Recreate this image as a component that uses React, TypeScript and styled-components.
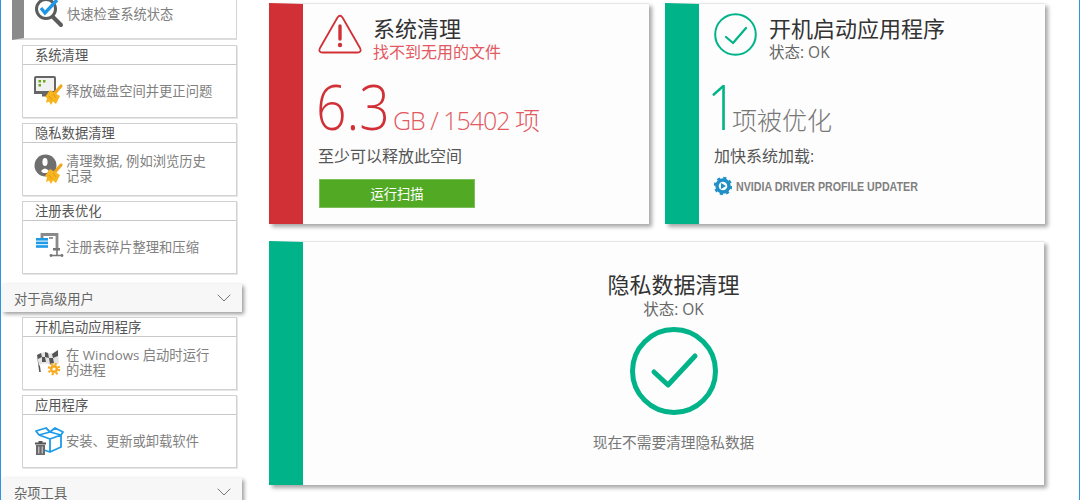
import React from "react";
import styled, { createGlobalStyle } from "styled-components";
import { ChevronDown } from "lucide-react";

const GlobalStyle = createGlobalStyle`
  html, body {
    margin: 0;
    padding: 0;
    background: #ffffff;
  }
  * {
    box-sizing: border-box;
  }
`;

const FONT = `"Open Sans", "Noto Sans CJK SC", sans-serif`;
const RED = "#d13136";
const GREEN = "#00b388";

const Page = styled.div`
  display: flex;
  width: 1080px;
  height: 500px;
  overflow: hidden;
  background: #ffffff;
  border-left: 1px solid #2b95e6;
  border-right: 1px solid #2b95e6;
  font-family: ${FONT};
`;

const Sidebar = styled.aside`
  flex: 0 0 268px;
  display: flex;
  flex-direction: column;
`;

const QuickCard = styled.div`
  display: flex;
  align-items: flex-start;
  flex: 0 0 40px;
  width: 225px;
  margin: 0 0 5px 11px;
  overflow: hidden;
  background: #fff;
  border-left: 12px solid #8a8a8a;
  border-right: 1px solid #d4d4d4;
  border-bottom: 2px solid #dcdcdc;
  padding-left: 11px;
`;

const QuickText = styled.span`
  margin-left: 2px;
  font-size: 13.3px;
  line-height: 28px;
  color: #808080;
`;

const ToolList = styled.div`
  display: flex;
  flex-direction: column;
  gap: 5px;
  margin: 0 0 10px 21px;
  width: 215px;
`;

const ToolCard = styled.div`
  display: flex;
  flex-direction: column;
  height: 73px;
  background: #fff;
  border: 1px solid #d2d2d2;
  box-shadow: 1px 1px 0 #e6e6e6;
`;

const ToolTitle = styled.div`
  flex: 0 0 19px;
  padding-left: 12px;
  border-bottom: 1px solid #c8c8c8;
  font-size: 13.3px;
  line-height: 18px;
  color: #555;
`;

const ToolBody = styled.div`
  flex: 1;
  display: flex;
  align-items: center;
  padding-left: 11px;
`;

const ToolText = styled.span`
  width: 150px;
  margin-left: 2px;
  font-size: 13.3px;
  line-height: 15px;
  color: #808080;
`;

const SectionHeader = styled.div`
  flex: 0 0 28px;
  display: flex;
  align-items: center;
  justify-content: space-between;
  width: 240px;
  margin: 0 0 5px 1px;
  padding: 0 6px 0 12px;
  background: #f7f7f7;
  box-shadow: 2px 2px 4px #999;
  font-size: 13.3px;
  color: #666;
`;

const Main = styled.main`
  flex: 1;
  display: grid;
  grid-template-columns: 380px 380px;
  grid-template-rows: 221px 244px;
  column-gap: 16px;
  row-gap: 17px;
  align-content: start;
  padding-top: 3px;
`;

const Card = styled.section<{ $stripe: string; $wide?: boolean }>`
  display: flex;
  flex-direction: column;
  grid-column: ${(p) => (p.$wide ? "1 / span 2" : "auto")};
  ${(p) => (p.$wide ? "width: 775px;" : "")}
  background: #fdfdfd;
  border-top: 1px solid #e6e6e6;
  border-left: 34px solid ${(p) => p.$stripe};
  box-shadow: 3px 3px 4px #a8a8a8;
`;

const CardInner = styled.div`
  display: flex;
  flex-direction: column;
  padding: 10px 0 0 15px;
`;

const CardHead = styled.div`
  display: flex;
  gap: 11px;
  height: 50px;
`;

const HeadIcon = styled.svg`
  flex: 0 0 44px;
  width: 44px;
  height: 44px;
  margin-top: -1px;
`;

const Title = styled.h2`
  margin: 0;
  font-size: 22px;
  font-weight: 400;
  line-height: 28px;
  color: #333;
`;

const SubTitle = styled.div`
  font-size: 15.5px;
  line-height: 21px;
  color: #666;
`;

const ErrorSubTitle = styled(SubTitle)`
  font-size: 16px;
  color: #e2595f;
`;

const BigRow = styled.div`
  display: flex;
  align-items: baseline;
  height: 72px;
  line-height: 72px;
  margin-top: 6px;
`;

// the original digits are narrower than Open Sans Light, hence the squeeze
const BigNumber = styled.span<{ $color: string }>`
  display: inline-block;
  margin: 0 -18px 0 -2px;
  font-size: 63px;
  font-weight: 300;
  transform: scaleX(0.85);
  transform-origin: left center;
  color: ${(p) => p.$color};
`;

const SingleDigit = styled(BigNumber)`
  margin: 0 -19px 0 -7px;
`;

const BigUnit = styled.span<{ $color: string; $tight?: boolean }>`
  margin-left: 8px;
  font-size: 25px;
  font-weight: 300;
  letter-spacing: ${(p) => (p.$tight ? "-1px" : "0")};
  color: ${(p) => p.$color};
`;

const Note = styled.div`
  margin-top: 2px;
  font-size: 16px;
  line-height: 24px;
  color: #555;
`;

const ScanButton = styled.button`
  display: block;
  width: 156px;
  height: 29px;
  margin: 11px 0 0 1px;
  padding: 0;
  border: 1px solid #7cc05a;
  background: #52aa24;
  color: #fff;
  font-family: ${FONT};
  font-size: 13.3px;
`;

const AppRow = styled.div`
  display: flex;
  align-items: center;
  gap: 4px;
  margin-top: 8px;
`;

const AppName = styled.span`
  display: inline-block;
  transform: scaleX(0.82);
  transform-origin: left center;
  white-space: nowrap;
  font-family: "Liberation Sans", sans-serif;
  font-size: 13px;
  font-weight: 700;
  color: #808080;
`;

const CenterInner = styled.div`
  display: flex;
  flex-direction: column;
  align-items: center;
  padding-top: 27px;
`;

const CenterTitle = styled(Title)`
  line-height: 30px;
`;

const CenterIcon = styled.svg`
  width: 90px;
  height: 90px;
  margin-top: 6px;
`;

const CenterNote = styled.div`
  margin-top: 16px;
  font-size: 14.7px;
  line-height: 20px;
  color: #777;
`;

const IconBox = styled.svg`
  flex: 0 0 30px;
  width: 30px;
  height: 30px;
`;

const QuickIconBox = styled(IconBox)`
  margin-top: -2px;
`;

// a little yellow broom, placed in the corner of the cleaning icons
const Broom = ({ x, y }: { x: number; y: number }) => (
  <g transform={`translate(${x} ${y})`}>
    <path d="M10 8 L16 1" stroke="#f2a81d" strokeWidth="3.2" strokeLinecap="round" />
    <path d="M5 5 L15 11 L11 19 L8 16.5 L6 20 L4 16.5 L1 18 L2 13 L0 12 Z" fill="#f7b51e" />
    <path d="M4 11 L7 15 M8 9 L11 13" stroke="#d98f0c" strokeWidth="0.8" />
  </g>
);

const QuickIcon = () => (
  <QuickIconBox viewBox="0 0 30 30">
    <circle cx="11" cy="11" r="9.5" fill="#fff" stroke="#5c5c5c" strokeWidth="3" />
    <path d="M18 19 L26 27" stroke="#5c5c5c" strokeWidth="4" strokeLinecap="round" />
    <path d="M6 10 L10 15 L22 2" fill="none" stroke="#1e96e6" strokeWidth="3.4" />
  </QuickIconBox>
);

const MonitorIcon = () => (
  <IconBox viewBox="0 0 30 30">
    <rect x="1" y="1" width="20" height="15" rx="1" fill="#f1f1f1" stroke="#666" strokeWidth="2" />
    <path d="M0 15 H22 V18 H0 Z" fill="#666" />
    <rect x="8" y="18" width="6" height="2.5" fill="#666" />
    <rect x="4.5" y="4" width="2.5" height="2.5" fill="#6aa81e" />
    <rect x="9" y="4" width="2.5" height="2.5" fill="#6aa81e" />
    <rect x="4.5" y="8" width="2.5" height="2.5" fill="#6aa81e" />
    <Broom x={11} y={9} />
  </IconBox>
);

const PrivacyIcon = () => (
  <IconBox viewBox="0 0 30 30">
    <circle cx="11.5" cy="11.5" r="11" fill="#6f6f6f" />
    <ellipse cx="11" cy="8" rx="2.6" ry="4" fill="#fff" />
    <path d="M7 17 Q11 12 15 17 L13 19 H9 Z" fill="#fff" />
    <Broom x={11} y={10} />
  </IconBox>
);

const RegistryIcon = () => (
  <IconBox viewBox="0 0 30 30">
    <path d="M8 6 V2.5 H23 V18" fill="none" stroke="#8a8a8a" strokeWidth="2.8" />
    <path d="M15 6 H19 M23 18 V23 M16 23.5 H29" stroke="#777" strokeWidth="1.6" />
    <rect x="19" y="16" width="7" height="2.5" fill="#777" />
    <rect x="2" y="6" width="12" height="2.6" fill="#1e9be8" />
    <rect x="2" y="9.6" width="12" height="2.6" fill="#1e9be8" />
    <rect x="2" y="13.2" width="12" height="2.6" fill="#1e9be8" />
    <circle cx="17" cy="23.5" r="1.4" fill="#777" />
    <circle cx="28" cy="23.5" r="1.4" fill="#777" />
  </IconBox>
);

const FlagIcon = () => (
  <IconBox viewBox="0 0 30 30">
    <path d="M6 24 L4 9" stroke="#555" strokeWidth="1.6" />
    <path d="M3 7 Q10 2 14 5 Q18 7 24 2 L25 15 Q18 19 14 16 Q8 14 5 18 Z" fill="#e3e3e3" />
    <path
      d="M3 7 L7 5 L8 9 L4 11 Z M11 4 L14 5 L15 10 L11 9 Z M18 6 L24 2 L24 8 L19 10 Z M8 9 L11 9 L12 14 L8 14 Z M15 10 L19 10 L20 15 L16 16 Z"
      fill="#555"
    />
    <circle cx="20" cy="21" r="4" fill="#f7a91c" />
    <circle
      cx="20"
      cy="21"
      r="5.2"
      fill="none"
      stroke="#f7a91c"
      strokeWidth="2.2"
      strokeDasharray="2.1 2"
    />
    <circle cx="20" cy="21" r="1.6" fill="#fff" />
  </IconBox>
);

const BoxIcon = () => (
  <IconBox viewBox="0 0 30 30">
    <path
      d="M5 9 L16 13 L27 9 V21 L16 26 L7 23 M16 13 V26 M5 9 L2 5 L12 2 L16 6 L21 2 L29 6 L27 9 M5 9 L16 6 L27 9"
      fill="#fff"
      stroke="#1e9be8"
      strokeWidth="1.8"
      strokeLinejoin="round"
    />
    <rect x="1" y="16.5" width="11" height="2" fill="#555" />
    <rect x="4.5" y="15" width="4" height="2" fill="#555" />
    <path d="M2 19 H11 V29 H2 Z" fill="#6a6a6a" />
    <path d="M4.8 20.5 V27.5 M8.2 20.5 V27.5" stroke="#ddd" strokeWidth="1" />
  </IconBox>
);

const WarningIcon = () => (
  <HeadIcon viewBox="0 0 44 44">
    <path
      d="M19.5 4.5 Q22 1 24.5 4.5 L42 35 Q44 39.5 39.5 39.5 H4.5 Q0 39.5 2 35 Z"
      fill="none"
      stroke={RED}
      strokeWidth="1.8"
      strokeLinejoin="round"
    />
    <path d="M22 13 V26" stroke={RED} strokeWidth="3.4" strokeLinecap="round" />
    <circle cx="22" cy="32" r="2.2" fill={RED} />
  </HeadIcon>
);

const OkIcon = () => (
  <HeadIcon viewBox="0 0 44 44">
    <circle cx="21.5" cy="21.5" r="20.3" fill="none" stroke={GREEN} strokeWidth="2" />
    <path
      d="M12 24 L19 30 L32 15"
      fill="none"
      stroke={GREEN}
      strokeWidth="2.2"
      strokeLinecap="round"
      strokeLinejoin="round"
    />
  </HeadIcon>
);

const GearIcon = () => (
  <svg width="18" height="20" viewBox="0 0 18 20">
    <circle cx="9" cy="10" r="6" fill="none" stroke="#1f8fc8" strokeWidth="3.4" />
    <circle cx="9" cy="10" r="8.2" fill="none" stroke="#1f8fc8" strokeWidth="2" strokeDasharray="3.2 3.24" />
    <path d="M7 7 L12 10 L7 13 Z" fill="#1f8fc8" />
  </svg>
);

const tools = [
  { title: "系统清理", text: "释放磁盘空间并更正问题", icon: <MonitorIcon /> },
  { title: "隐私数据清理", text: "清理数据, 例如浏览历史记录", icon: <PrivacyIcon /> },
  { title: "注册表优化", text: "注册表碎片整理和压缩", icon: <RegistryIcon /> },
];

const advancedTools = [
  { title: "开机启动应用程序", text: "在 Windows 启动时运行的进程", icon: <FlagIcon /> },
  { title: "应用程序", text: "安装、更新或卸载软件", icon: <BoxIcon /> },
];

type Tool = (typeof tools)[number];

const ToolGroup = ({ items }: { items: Tool[] }) => (
  <ToolList>
    {items.map((tool) => (
      <ToolCard key={tool.title}>
        <ToolTitle>{tool.title}</ToolTitle>
        <ToolBody>
          {tool.icon}
          <ToolText>{tool.text}</ToolText>
        </ToolBody>
      </ToolCard>
    ))}
  </ToolList>
);

export default function App() {
  return (
    <Page>
      <GlobalStyle />
      <Sidebar>
        <QuickCard>
          <QuickIcon />
          <QuickText>快速检查系统状态</QuickText>
        </QuickCard>
        <ToolGroup items={tools} />
        <SectionHeader>
          对于高级用户
          <ChevronDown size={24} strokeWidth={1} color="#777" />
        </SectionHeader>
        <ToolGroup items={advancedTools} />
        <SectionHeader>
          杂项工具
          <ChevronDown size={24} strokeWidth={1} color="#777" />
        </SectionHeader>
      </Sidebar>

      <Main>
        <Card $stripe={RED}>
          <CardInner>
            <CardHead>
              <WarningIcon />
              <div>
                <Title>系统清理</Title>
                <ErrorSubTitle>找不到无用的文件</ErrorSubTitle>
              </div>
            </CardHead>
            <BigRow>
              <BigNumber $color={RED}>6.3</BigNumber>
              <BigUnit $color="#e2595f" $tight>
                GB / 15402 项
              </BigUnit>
            </BigRow>
            <Note>至少可以释放此空间</Note>
            <ScanButton>运行扫描</ScanButton>
          </CardInner>
        </Card>

        <Card $stripe={GREEN}>
          <CardInner>
            <CardHead>
              <OkIcon />
              <div>
                <Title>开机启动应用程序</Title>
                <SubTitle>状态: OK</SubTitle>
              </div>
            </CardHead>
            <BigRow>
              <SingleDigit $color={GREEN}>1</SingleDigit>
              <BigUnit $color="#777">项被优化</BigUnit>
            </BigRow>
            <Note>加快系统加载:</Note>
            <AppRow>
              <GearIcon />
              <AppName>NVIDIA DRIVER PROFILE UPDATER</AppName>
            </AppRow>
          </CardInner>
        </Card>

        <Card $stripe={GREEN} $wide>
          <CenterInner>
            <CenterTitle>隐私数据清理</CenterTitle>
            <SubTitle>状态: OK</SubTitle>
            <CenterIcon viewBox="0 0 90 90">
              <circle cx="45" cy="45" r="41.5" fill="none" stroke={GREEN} strokeWidth="5" />
              <path
                d="M25 46 L39 59 L66 30"
                fill="none"
                stroke={GREEN}
                strokeWidth="5"
                strokeLinecap="round"
                strokeLinejoin="round"
              />
            </CenterIcon>
            <CenterNote>现在不需要清理隐私数据</CenterNote>
          </CenterInner>
        </Card>
      </Main>
    </Page>
  );
}
